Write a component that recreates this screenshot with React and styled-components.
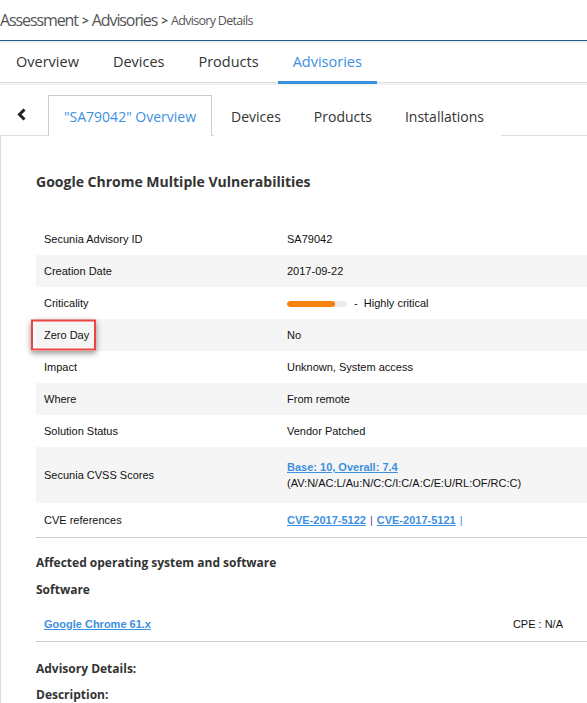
import React from 'react'
import styled, { createGlobalStyle } from 'styled-components'

const Global = createGlobalStyle`
  body {
    margin: 0;
    background: #fff;
    font-family: "Open Sans", sans-serif;
    color: #333;
    overflow: hidden;
  }
`

const Page = styled.div`
  width: 587px;
  height: 703px;
  overflow: hidden;
`

const Breadcrumb = styled.div`
  height: 40px;
  display: flex;
  align-items: center;
  border-bottom: 1px solid #1d5b8b;
  color: #555;
  font-size: 16px;
  letter-spacing: -1.1px;
  .sep {
    font-weight: 700;
    font-size: 12px;
    margin: 1px 3px 0 4px;
    letter-spacing: 0;
  }
  .last {
    font-size: 12.5px;
    letter-spacing: -0.7px;
    padding-top: 1px;
  }
`

const Band = styled.div`
  height: 2px;
  background: #f2f2f2;
`

const MainTabs = styled.div`
  height: 39px;
  display: flex;
  gap: 4px;
  padding-left: 1px;
  border-bottom: 1px solid #ddd;
`

const MainTab = styled.div`
  display: flex;
  align-items: center;
  padding: 0 15px 1px;
  font-size: 14.5px;
  color: ${p => (p.active ? '#3d8fdf' : '#333')};
  border-bottom: 3px solid ${p => (p.active ? '#3d8fdf' : 'transparent')};
  margin-bottom: -2px;
`

const SubTabs = styled.div`
  height: 50px;
  display: flex;
  align-items: flex-end;
  border-top: 2px solid #f2f2f2;
  border-bottom: 1px solid #ddd;
`

const Back = styled.div`
  width: 48px;
  height: 41px;
  display: flex;
  align-items: center;
  justify-content: center;
  padding-right: 4px;
  box-sizing: border-box;
`

const SubTab = styled.div`
  height: 41px;
  display: flex;
  align-items: center;
  padding: 0 ${p => (p.active ? '15px' : '16px')};
  font-size: 14px;
  box-sizing: border-box;
  color: ${p => (p.active ? '#3d8fdf' : '#333')};
  background: #fff;
  border: 1px solid ${p => (p.active ? '#ccc' : 'transparent')};
  border-bottom: none;
  margin-bottom: -1px;
  margin-right: ${p => (p.active ? '2px' : '-1px')};
`

const Content = styled.div`
  border-left: 1px solid #ddd;
  padding: 35px 0 0 35px;
`

const Title = styled.h2`
  margin: 0 0 30px;
  font-size: 14px;
  font-weight: 700;
  line-height: 22px;
  color: #333;
`

const Table = styled.div`
  border-bottom: 1px solid #ccc;
  font-family: "Liberation Sans", Arial, sans-serif;
  font-size: 11px;
  color: #111;
`

const Row = styled.div`
  display: grid;
  grid-template-columns: 251px 1fr;
  align-items: center;
  height: ${p => p.h || 32}px;
  background: ${p => (p.shade ? '#f5f5f5' : '#fff')};
`

const Label = styled.div`
  position: relative;
  padding-left: 8px;
`

const Highlight = styled.div`
  position: absolute;
  left: -5px;
  top: 50%;
  transform: translateY(-50%);
  width: 65px;
  height: 31px;
  box-sizing: border-box;
  border: 2px solid #ec4440;
  box-shadow: 0 2px 6px rgba(0, 0, 0, 0.45);
`

const Value = styled.div`
  line-height: 16px;
`

const Bar = styled.span`
  display: inline-block;
  vertical-align: middle;
  width: 60px;
  height: 6px;
  border-radius: 3px;
  background: #ececec;
  overflow: hidden;
  margin-right: 7px;
  span {
    display: block;
    height: 100%;
    background: #f7820e;
    border-radius: 3px;
  }
`

const Link = styled.a`
  color: #3d8fdf;
  font-weight: 700;
  text-decoration: underline;
`

const Pipe = styled.span`
  color: ${p => p.color || '#555'};
  margin: 0 4px;
`

const Heading = styled.div`
  font-size: 12px;
  font-weight: 700;
  color: #333;
  line-height: 18px;
  margin-top: ${p => p.mt || 0}px;
`

const SoftwareRow = styled.div`
  margin-top: 8px;
  height: 34px;
  display: flex;
  align-items: center;
  justify-content: space-between;
  padding: 0 24px 0 8px;
  border-bottom: 1px solid #ccc;
  font-family: "Liberation Sans", Arial, sans-serif;
  font-size: 11px;
  color: #111;
`

const rows = [
  { label: 'Secunia Advisory ID', value: 'SA79042' },
  { label: 'Creation Date', value: '2017-09-22' },
  { label: 'Criticality', type: 'crit' },
  { label: 'Zero Day', value: 'No', mark: true },
  { label: 'Impact', value: 'Unknown, System access' },
  { label: 'Where', value: 'From remote' },
  { label: 'Solution Status', value: 'Vendor Patched' },
  { label: 'Secunia CVSS Scores', type: 'cvss', h: 56 },
  { label: 'CVE references', type: 'cve', h: 34 },
]

const renderValue = r => {
  if (r.type === 'crit') {
    return (
      <>
        <Bar><span style={{ width: '80%' }} /></Bar>- &nbsp;Highly critical
      </>
    )
  }
  if (r.type === 'cvss') {
    return (
      <>
        <Link href="#">Base: 10, Overall: 7.4</Link>
        <br />
        (AV:N/AC:L/Au:N/C:C/I:C/A:C/E:U/RL:OF/RC:C)
      </>
    )
  }
  if (r.type === 'cve') {
    return (
      <>
        <Link href="#">CVE-2017-5122</Link>
        <Pipe color="#6a4a8a">|</Pipe>
        <Link href="#">CVE-2017-5121</Link>
        <Pipe color="#3d8fdf">|</Pipe>
      </>
    )
  }
  return r.value
}

const Chevron = () => (
  <svg width="10" height="13" viewBox="0 0 10 13">
    <polyline points="7.5,1.5 2.5,6.5 7.5,11.5" fill="none" stroke="#222" strokeWidth="3" />
  </svg>
)

export default function App() {
  return (
    <Page>
      <Global />
      <Breadcrumb>
        Assessment<span className="sep">&gt;</span>Advisories<span className="sep">&gt;</span>
        <span className="last">Advisory Details</span>
      </Breadcrumb>
      <Band />
      <MainTabs>
        <MainTab>Overview</MainTab>
        <MainTab>Devices</MainTab>
        <MainTab>Products</MainTab>
        <MainTab active>Advisories</MainTab>
      </MainTabs>
      <SubTabs>
        <Back><Chevron /></Back>
        <SubTab active>"SA79042" Overview</SubTab>
        <SubTab>Devices</SubTab>
        <SubTab>Products</SubTab>
        <SubTab>Installations</SubTab>
      </SubTabs>
      <Content>
        <Title>Google Chrome Multiple Vulnerabilities</Title>
        <Table>
          {rows.map((r, i) => (
            <Row key={r.label} shade={i % 2 === 1} h={r.h}>
              <Label>
                {r.label}
                {r.mark && <Highlight />}
              </Label>
              <Value>{renderValue(r)}</Value>
            </Row>
          ))}
        </Table>
        <Heading mt={16}>Affected operating system and software</Heading>
        <Heading mt={9}>Software</Heading>
        <SoftwareRow>
          <Link href="#">Google Chrome 61.x</Link>
          <span>CPE : N/A</span>
        </SoftwareRow>
        <Heading mt={18}>Advisory Details:</Heading>
        <Heading mt={8}>Description:</Heading>
      </Content>
    </Page>
  )
}
